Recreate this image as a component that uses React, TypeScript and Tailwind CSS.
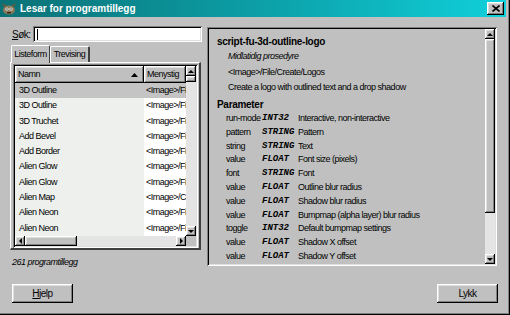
import React from 'react';

const raised =
  'shadow-[inset_-1px_-1px_#000,inset_1px_1px_#fff,inset_-2px_-2px_#808080,inset_2px_2px_#dfdfdf]';
const sunken =
  'shadow-[inset_1px_1px_#808080,inset_-1px_-1px_#fff,inset_2px_2px_#000,inset_-2px_-2px_#dfdfdf]';

const rows = [
  ['3D Outline', '<Image>/Fi'],
  ['3D Outline', '<Image>/Fi'],
  ['3D Truchet', '<Image>/Fi'],
  ['Add Bevel', '<Image>/Fi'],
  ['Add Border', '<Image>/Fi'],
  ['Alien Glow', '<Image>/Fi'],
  ['Alien Glow', '<Image>/Fi'],
  ['Alien Map', '<Image>/Co'],
  ['Alien Neon', '<Image>/Fi'],
  ['Alien Neon', '<Image>/Fi'],
  ['Alien Neon', '<Image>/Fi'],
];

const params = [
  ['run-mode', 'INT32', 'Interactive, non-interactive'],
  ['pattern', 'STRING', 'Pattern'],
  ['string', 'STRING', 'Text'],
  ['value', 'FLOAT', 'Font size (pixels)'],
  ['font', 'STRING', 'Font'],
  ['value', 'FLOAT', 'Outline blur radius'],
  ['value', 'FLOAT', 'Shadow blur radius'],
  ['value', 'FLOAT', 'Bumpmap (alpha layer) blur radius'],
  ['toggle', 'INT32', 'Default bumpmap settings'],
  ['value', 'FLOAT', 'Shadow X offset'],
  ['value', 'FLOAT', 'Shadow Y offset'],
];

function Arrow({ dir }: { dir: 'up' | 'down' | 'left' | 'right' }) {
  const pts = {
    up: '1,4 4,1 7,4',
    down: '1,1 4,4 7,1',
    left: '4,1 1,4 4,7',
    right: '1,1 4,4 1,7',
  }[dir];
  const vert = dir === 'up' || dir === 'down';
  return (
    <div className={`w-[10px] h-[10px] shrink-0 bg-[#c0c0c0] flex items-center justify-center ${raised}`}>
      <svg width={vert ? 8 : 5} height={vert ? 5 : 8} viewBox={vert ? '0 0 8 5' : '0 0 5 8'}>
        <polygon points={pts} fill="#000" />
      </svg>
    </div>
  );
}

function GimpIcon() {
  return (
    <svg width="14" height="12" viewBox="0 0 14 12">
      <ellipse cx="7" cy="7" rx="6" ry="4.5" fill="#8a7a5a" />
      <path d="M2 4 L0 0 L5 3 Z M12 4 L14 0 L9 3 Z" fill="#6a5a3a" />
      <circle cx="5" cy="6" r="1.6" fill="#fff" />
      <circle cx="9" cy="6" r="1.6" fill="#fff" />
      <circle cx="5" cy="6" r="0.7" fill="#000" />
      <circle cx="9" cy="6" r="0.7" fill="#000" />
      <rect x="5" y="9" width="4" height="1.5" fill="#3a2a1a" />
    </svg>
  );
}

export default function App() {
  return (
    <div
      className="w-[510px] h-[315px] bg-[#c0c0c0] flex flex-col border-r border-b border-r-[#000] border-b-[#000] shadow-[inset_-1px_-1px_#808080] text-[9px] tracking-[-0.5px] text-black"
      style={{ fontFamily: '"Liberation Sans", Arial, sans-serif' }}
    >
      {/* title bar */}
      <div className="h-[17px] shrink-0 mr-[3px] bg-gradient-to-r from-[#0a7176] via-[#0c9ea6] to-[#10d0da] flex items-center pl-[2px] pr-[2px]">
        <GimpIcon />
        <span className="ml-[4px] font-bold text-white text-[10px] tracking-[0px]">Lesar for programtillegg</span>
        <div className={`ml-auto w-[17px] h-[13px] bg-[#c0c0c0] flex items-center justify-center ${raised}`}>
          <svg width="8" height="7" viewBox="0 0 8 7">
            <path d="M0.5 0.5 L7.5 6.5 M7.5 0.5 L0.5 6.5" stroke="#000" strokeWidth="1.6" />
          </svg>
        </div>
      </div>

      {/* body */}
      <div className="flex-1 flex flex-col pl-[10px] pt-[9px]">
        <div className="flex gap-[5px]">
          {/* left column */}
          <div className="w-[192px] flex flex-col">
            <div className="flex items-center h-[16px]">
              <span className="w-[21px] ml-[2px] text-[10px]">
                <span className="underline">S</span>øk:
              </span>
              <div className={`flex-1 h-[16px] bg-white ${sunken} flex items-center pl-[4px]`}>
                <div className="w-[1px] h-[11px] bg-black" />
              </div>
            </div>

            {/* tabs */}
            <div className="flex items-end h-[20px] pl-[1px]">
              <div className="h-[18px] w-[39px] justify-center flex items-center border-t border-l border-white border-r border-r-[#404040] rounded-t-[2px] bg-[#c0c0c0] relative top-[1px] z-10">
                Listeform
              </div>
              <div className="h-[16px] w-[40px] justify-center flex items-center border-t border-l border-white border-r-2 border-r-[#404040] rounded-t-[2px]">
                Trevising
              </div>
            </div>

            {/* tab panel */}
            <div className="w-[191px] h-[188px] border-t border-l border-white border-r-2 border-b-2 border-r-[#404040] border-b-[#404040] pl-[2px] pt-[1px]">
              <div className={`w-[185px] h-[184px] ${sunken} p-[2px] flex flex-col`}>
                <div className="flex flex-1 min-h-0">
                  <div className="flex-1 flex flex-col min-w-0 overflow-hidden">
                    {/* header */}
                    <div className="flex h-[17px] shrink-0">
                      <div className={`w-[129px] h-[17px] flex items-center pl-[3px] pr-[6px] ${raised}`}>
                        <span>Namn</span>
                        <svg className="ml-auto" width="7" height="4" viewBox="0 0 7 4">
                          <polygon points="0,4 3.5,0 7,4" fill="#000" />
                        </svg>
                      </div>
                      <div className={`flex-1 h-[17px] flex items-center pl-[3px] overflow-hidden whitespace-nowrap ${raised}`}>
                        Menystig
                      </div>
                    </div>
                    {rows.map((r, i) => (
                      <div key={i} className="flex h-[15.3px] shrink-0 leading-[15px]">
                        <div className={`w-[129px] pl-[4px] ${i === 0 ? 'bg-[#c4c4c4]' : 'bg-[#eef0ee]'}`}>{r[0]}</div>
                        <div className={`flex-1 pl-[2px] whitespace-nowrap overflow-hidden ${i === 0 ? 'bg-[#c4c4c4]' : 'bg-white'}`}>
                          {r[1]}
                        </div>
                      </div>
                    ))}
                  </div>
                  {/* vertical scrollbar */}
                  <div className="w-[10px] flex flex-col bg-[#e4e4e4]">
                    <Arrow dir="up" />
                    <div className={`h-[6px] bg-[#c0c0c0] ${raised}`} />
                    <div className="flex-1" />
                    <Arrow dir="down" />
                  </div>
                </div>
                {/* horizontal scrollbar */}
                <div className="flex h-[10px] shrink-0">
                  <div className="flex-1 flex bg-[#e4e4e4]">
                    <Arrow dir="left" />
                    <div className={`w-[52px] bg-[#c0c0c0] ${raised}`} />
                    <div className="flex-1" />
                    <Arrow dir="right" />
                  </div>
                  <div className="w-[10px] bg-[#c0c0c0]" />
                </div>
              </div>
            </div>

            <div className="italic mt-[6px] ml-[2px]">261 programtillegg</div>
          </div>

          {/* right panel */}
          <div className={`w-[290px] h-[239px] mt-[1px] ${sunken} p-[2px] flex`}>
            <div className="flex-1 pl-[8px] pt-[6px] flex flex-col">
              <div className="font-bold leading-[14px] text-[10px] tracking-[-0.3px]">script-fu-3d-outline-logo</div>
              <div className="italic ml-[11px] leading-[14px] mt-[0px]">Midlatidig prosedyre</div>
              <div className="ml-[11px] leading-[14px] mt-[2px]">&lt;Image&gt;/File/Create/Logos</div>
              <div className="ml-[11px] leading-[14px] mt-[1px]">Create a logo with outlined text and a drop shadow</div>
              <div className="font-bold leading-[14px] mt-[4px] text-[10px] tracking-[-0.3px]">Parameter</div>
              <div className="flex flex-col">
                {params.map((p, i) => (
                  <div key={i} className="flex h-[13.8px] leading-[13.8px] ml-[9px] whitespace-nowrap">
                    <span className="w-[36px]">{p[0]}</span>
                    <span
                      className="w-[36px] font-bold italic text-[9px] tracking-[0px]"
                      style={{ fontFamily: '"Liberation Mono", "Courier New", monospace' }}
                    >
                      {p[1]}
                    </span>
                    <span>{p[2]}</span>
                  </div>
                ))}
              </div>
            </div>
            <div className="w-[10px] flex flex-col bg-[#e4e4e4]">
              <Arrow dir="up" />
              <div className={`h-[174px] bg-[#c0c0c0] ${raised}`} />
              <div className="flex-1" />
              <Arrow dir="down" />
            </div>
          </div>
        </div>

        {/* buttons */}
        <div className="flex justify-between mt-auto mb-[11px] pl-[2px] pr-[11px] text-[10px]">
          <button className={`w-[61px] h-[19px] bg-[#c0c0c0] ${raised}`}>
            <span className="underline">H</span>jelp
          </button>
          <button className={`w-[61px] h-[19px] bg-[#c0c0c0] ${raised}`}>Lykk</button>
        </div>
      </div>
    </div>
  );
}
